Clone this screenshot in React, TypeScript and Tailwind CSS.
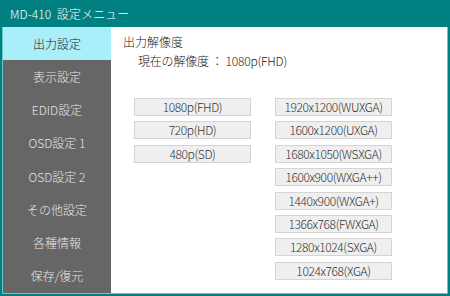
import React from "react";

const menu = ["出力設定", "表示設定", "EDID設定", "OSD設定 1", "OSD設定 2", "その他設定", "各種情報", "保存/復元"];

const leftRes = ["1080p(FHD)", "720p(HD)", "480p(SD)"];
const rightRes = [
  "1920x1200(WUXGA)",
  "1600x1200(UXGA)",
  "1680x1050(WSXGA)",
  "1600x900(WXGA++)",
  "1440x900(WXGA+)",
  "1366x768(FWXGA)",
  "1280x1024(SXGA)",
  "1024x768(XGA)",
];

const ResButton = ({ label }: { label: string }) => (
  <button
    type="button"
    className="h-[18px] w-[117px] bg-[#efefef] border border-[#d4d4d4] text-[#333] text-[12px] font-light leading-none tracking-[-0.4px] flex items-center justify-center"
  >
    {label}
  </button>
);

export default function App() {
  return (
    <div
      className="w-[450px] h-[296px] bg-[#008080] flex flex-col font-light"
      style={{ fontFamily: '"Noto Sans CJK JP", "Noto Sans", sans-serif' }}
    >
      {/* Title bar */}
      <div className="h-[27px] px-[10px] flex items-center text-white text-[12px] tracking-[0.1px] whitespace-pre">
        MD-410  設定メニュー
      </div>

      {/* Body */}
      <div className="flex-1 flex pl-[2px] pr-[2px] pb-[2px] min-h-0">
        <div className="flex-1 flex border-l border-r border-b border-[#6cc4c4] min-h-0">
          {/* Side menu */}
          <div className="w-[108px] bg-[#666666] flex flex-col">
            {menu.map((item, i) => (
              <div
                key={item}
                className={`flex-1 flex items-center justify-center text-[12px] ${
                  i === 0 ? "bg-[#aaeefa] text-[#222]" : "text-[#e6e6e6]"
                }`}
              >
                {item}
              </div>
            ))}
          </div>

          {/* Content */}
          <div className="flex-1 bg-white pl-[12px] pt-[6px] flex flex-col">
            <div className="text-[12px] text-[#222] leading-[18px]">出力解像度</div>
            <div className="pl-[15px] mt-[1px] text-[12px] text-[#222] leading-[18px] tracking-[-0.2px]">
              現在の解像度 ： 1080p(FHD)
            </div>

            <div className="mt-[28px] pl-[11px] flex gap-[24px]">
              <div className="flex flex-col gap-[5.4px]">
                {leftRes.map((r) => (
                  <ResButton key={r} label={r} />
                ))}
              </div>
              <div className="flex flex-col gap-[5.4px]">
                {rightRes.map((r) => (
                  <ResButton key={r} label={r} />
                ))}
              </div>
            </div>
          </div>
        </div>
      </div>
    </div>
  );
}
